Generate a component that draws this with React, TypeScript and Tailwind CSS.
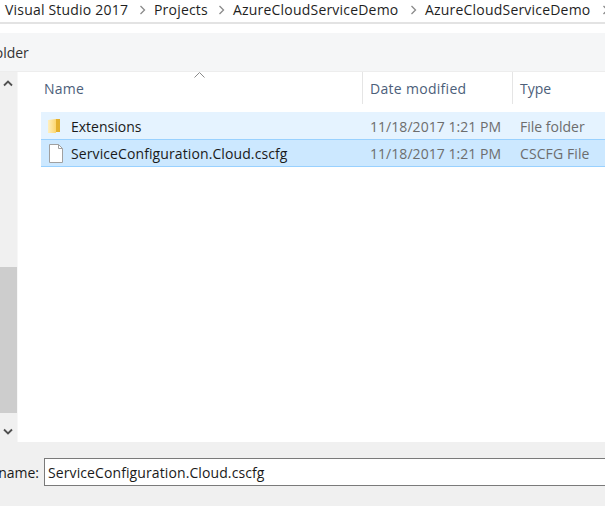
import React from "react";

const font = { fontFamily: '"Open Sans", "Noto Sans", sans-serif' };

function Crumb({ label, width }: { label: string; width: string }) {
  return (
    <div className="flex shrink-0 items-center">
      <span className={`${width} shrink-0 whitespace-nowrap`}>{label}</span>
      <svg width="7" height="10" viewBox="0 0 7 10" className="mx-[8px] shrink-0" fill="none" stroke="#8a8a8a" strokeWidth="1.3">
        <path d="M1.5 1 L5.5 5 L1.5 9" />
      </svg>
    </div>
  );
}

function Row({
  name,
  date,
  type,
  selected,
  icon,
}: {
  name: string;
  date: string;
  type: string;
  selected?: boolean;
  icon: React.ReactNode;
}) {
  return (
    <div
      className={
        selected
          ? "flex h-[28px] items-center border-y border-[#99d1ff] bg-[#cce8ff] tracking-[0.1px]"
          : "flex h-[27px] items-center bg-[#e5f3ff] pt-[1px]"
      }
    >
      <div className="flex w-[24px] shrink-0 justify-center pl-[6px]">{icon}</div>
      <div className="w-[305px] shrink-0 pl-[6px] text-[14px] text-[#1a1a1a]">{name}</div>
      <div className="w-[150px] shrink-0 text-[14px] tracking-[0.05px] text-[#6d6d6d]">{date}</div>
      <div className="whitespace-nowrap text-[14px] text-[#6d6d6d]">{type}</div>
    </div>
  );
}

export default function App() {
  return (
    <div style={font} className="flex h-[506px] w-[605px] flex-col overflow-hidden bg-white">
      {/* address bar */}
      <div className="flex h-[24px] shrink-0 items-center border-b-2 border-[#e3e3e3] pb-[3px] pl-[5px] text-[14px] tracking-[0.2px] text-[#1f1f1f]">
        <Crumb label="Visual Studio 2017" width="w-[126px]" />
        <Crumb label="Projects" width="w-[56px]" />
        <Crumb label="AzureCloudServiceDemo" width="w-[169px]" />
        <Crumb label="AzureCloudServiceDemo" width="w-[169px]" />
      </div>
      <div className="h-[9px] shrink-0 bg-white" />

      {/* toolbar */}
      <div className="flex h-[39px] shrink-0 items-center border-b border-[#ededed] bg-[#f5f6f7] text-[14px] text-[#333]">
        <span className="-ml-[10px]">folder</span>
      </div>

      <div className="flex min-h-0 flex-1">
        {/* nav pane scrollbar */}
        <div className="flex w-[17px] shrink-0 flex-col bg-[#f0f0f0]">
          <div className="flex h-[22px] shrink-0 items-center justify-center pr-[2px]">
            <svg width="10" height="7" viewBox="0 0 10 7" fill="none" stroke="#505050" strokeWidth="1.8">
              <path d="M1 5.5 L5 1.5 L9 5.5" />
            </svg>
          </div>
          <div className="h-[173px] shrink-0" />
          <div className="h-[146px] shrink-0 bg-[#cdcdcd]" />
          <div className="flex flex-1 items-center justify-center pr-[2px] pt-[8px]">
            <svg width="10" height="7" viewBox="0 0 10 7" fill="none" stroke="#505050" strokeWidth="1.8">
              <path d="M1 1.5 L5 5.5 L9 1.5" />
            </svg>
          </div>
        </div>
        <div className="w-[1px] shrink-0 bg-[#f7f7f7]" />

        {/* file list */}
        <div className="relative min-w-0 flex-1 bg-white">
          <svg width="11" height="6" viewBox="0 0 11 6" fill="none" stroke="#8a8a8a" className="absolute left-[176px] top-[0px]">
            <path d="M0.5 5.5 L5.5 0.5 L10.5 5.5" />
          </svg>
          <div className="flex h-[32px] items-start pl-[26px] text-[14px] text-[#4c607a]">
            <div className="flex h-[32px] w-[319px] shrink-0 items-center border-r border-[#e5e5e5] tracking-[0.2px]">Name</div>
            <div className="flex h-[32px] w-[150px] shrink-0 items-center border-r border-[#e5e5e5] pl-[7px] tracking-[0.3px]">Date modified</div>
            <div className="flex h-[32px] items-center pl-[7px]">Type</div>
          </div>
          <div className="ml-[23px] mt-[8px] flex flex-col">
            <Row
              name="Extensions"
              date="11/18/2017 1:21 PM"
              type="File folder"
              icon={
                <svg width="14" height="16" viewBox="0 0 14 16" className="-ml-[4px]">
                  <defs>
                    <linearGradient id="folderFront" x1="0" x2="1" y1="0" y2="0">
                      <stop offset="0" stopColor="#fff0c0" />
                      <stop offset="1" stopColor="#fcd66e" />
                    </linearGradient>
                  </defs>
                  <path d="M1 2 L9 1 V15 H1 Z" fill="url(#folderFront)" />
                  <path d="M9 1 H13 V14 H9 Z" fill="#e3b02e" />
                </svg>
              }
            />
            <Row
              name="ServiceConfiguration.Cloud.cscfg"
              date="11/18/2017 1:21 PM"
              type="CSCFG File"
              selected
              icon={
                <svg width="16" height="19" viewBox="0 0 16 19" fill="#fff" stroke="#a0a0a0">
                  <path d="M1.5 0.5 H10.5 L14.5 4.5 V18.5 H1.5 Z" />
                  <path d="M10.5 0.5 V4.5 H14.5" fill="none" />
                </svg>
              }
            />
          </div>
        </div>
      </div>

      {/* file name */}
      <div className="flex h-[64px] shrink-0 items-start bg-[#f0f0f0] pt-[16px] text-[14px] text-[#1a1a1a]">
        <span className="flex h-[28px] w-[44px] shrink-0 items-center justify-end whitespace-nowrap pr-[5px]">name:</span>
        <div className="flex h-[28px] min-w-0 flex-1 items-center border border-r-0 border-[#7a7a7a] bg-white pl-[3px] tracking-[0.1px]">
          ServiceConfiguration.Cloud.cscfg
        </div>
      </div>
    </div>
  );
}
